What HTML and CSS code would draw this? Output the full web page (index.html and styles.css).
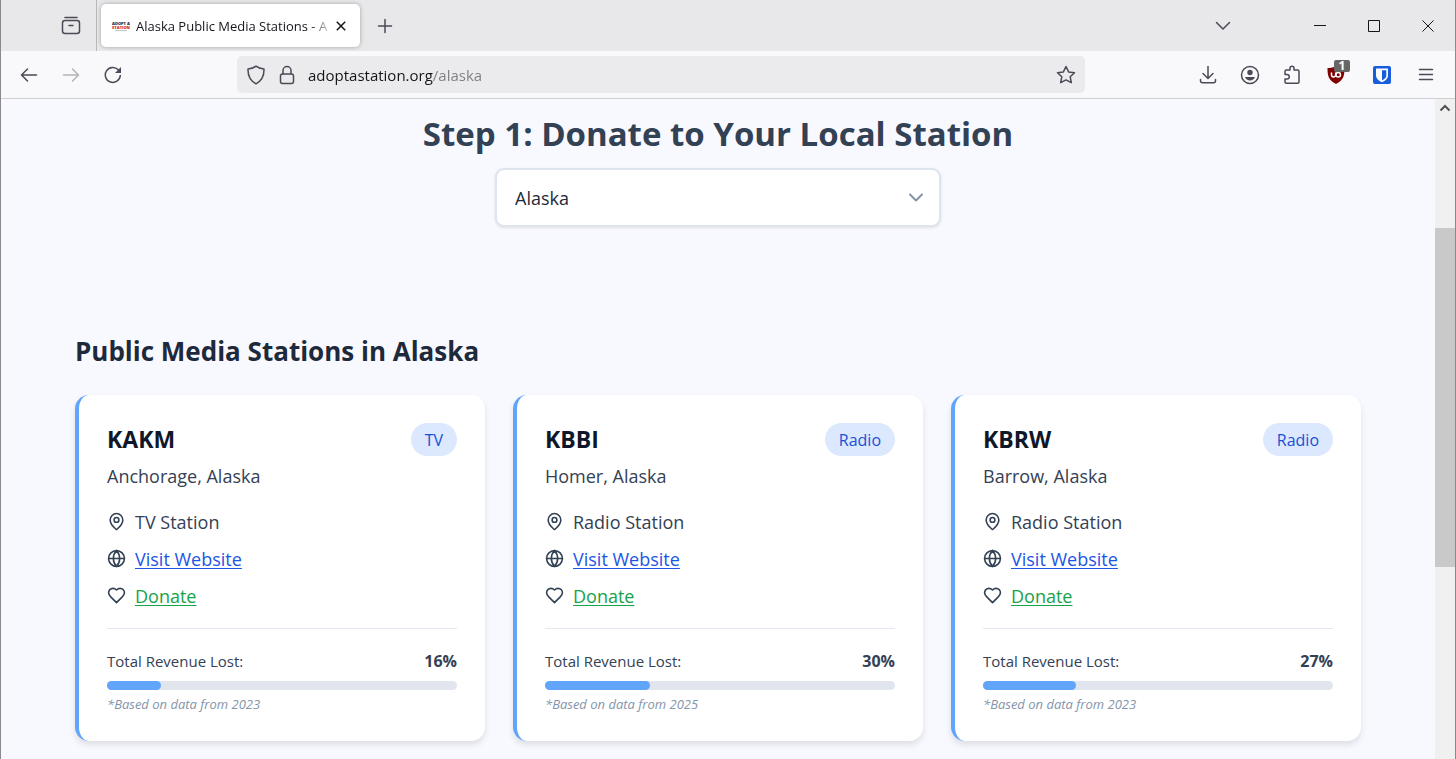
FILE: index.html
```
<!DOCTYPE html>
<html lang="en">
<head>
    <meta charset="UTF-8">
    <meta name="viewport" content="width=device-width, initial-scale=1.0">
    <title>Alaska Public Media Stations - Adopt a Station</title>
    <link rel="stylesheet" href="styles.css">
</head>
<body>

<!-- Shared icons -->
<svg class="sprite" aria-hidden="true">
    <symbol id="icon-pin" viewBox="0 0 24 24">
        <path d="M20 10c0 5-5.500 10.200-7.400 11.800a1 1 0 0 1-1.200 0C9.500 20.200 4 15 4 10a8 8 0 0 1 16 0"/>
        <circle cx="12" cy="10" r="3"/>
    </symbol>
    <symbol id="icon-globe" viewBox="0 0 24 24">
        <circle cx="12" cy="12" r="10"/>
        <path d="M12 2a14.500 14.500 0 0 0 0 20 14.500 14.500 0 0 0 0-20M2 12h20"/>
    </symbol>
    <symbol id="icon-heart" viewBox="0 0 24 24">
        <path d="M19 14c1.490-1.460 3-3.210 3-5.500A5.500 5.500 0 0 0 16.500 3c-1.760 0-3 .5-4.500 2-1.500-1.500-2.740-2-4.500-2A5.500 5.500 0 0 0 2 8.500c0 2.300 1.500 4.050 3 5.500l7 7Z"/>
    </symbol>
</svg>

<div class="window">
    <!-- Tab strip -->
    <div class="tab-bar">
        <div class="tab-tools">
            <button type="button" class="icon-btn" aria-label="View">
                <svg class="line" width="20" height="20" viewBox="0 0 20 20"><path d="M4 1.500h12"/><rect x="1.500" y="4.500" width="17" height="13" rx="2.500"/><path d="M8 9.500h4"/></svg>
            </button>
        </div>
        <div class="tab">
            <svg class="favicon" width="18" height="10" viewBox="0 0 18 10" aria-hidden="true">
                <text x="9" y="4" class="fav-top">ADOPT A</text>
                <text x="9" y="8" class="fav-main">STATION</text>
                <path d="M3 9.500h12" stroke="#9aa3ad" stroke-width=".6"/>
            </svg>
            <span class="tab-title">Alaska Public Media Stations - A</span>
            <button type="button" class="tab-close" aria-label="Close tab">
                <svg width="10" height="10" viewBox="0 0 10 10"><path d="M.8.8l8.400 8.400M9.200.8L.8 9.200"/></svg>
            </button>
        </div>
        <button type="button" class="icon-btn new-tab" aria-label="New tab">
            <svg class="line" width="16" height="16" viewBox="0 0 16 16"><path d="M8 1.500v13M1.500 8h13"/></svg>
        </button>
        <div class="window-controls">
            <button type="button" class="icon-btn list-tabs" aria-label="List all tabs">
                <svg class="line" width="16" height="16" viewBox="0 0 16 16"><path d="M1.500 4.500L8 11l6.500-6.500"/></svg>
            </button>
            <button type="button" class="win-btn" aria-label="Minimize">
                <svg width="12" height="12" viewBox="0 0 12 12"><path d="M0 5.500h12"/></svg>
            </button>
            <button type="button" class="win-btn" aria-label="Maximize">
                <svg width="12" height="12" viewBox="0 0 12 12"><path d="M.5.5h11v11H.5z"/></svg>
            </button>
            <button type="button" class="win-btn" aria-label="Close">
                <svg width="12" height="12" viewBox="0 0 12 12"><path d="M.5.5l11 11M11.500.5l-11 11"/></svg>
            </button>
        </div>
    </div>

    <!-- Navigation bar -->
    <div class="nav-bar">
        <button type="button" class="icon-btn" aria-label="Back">
            <svg class="line" width="18" height="16" viewBox="0 0 18 16"><path d="M7.500 2L1.500 8l6 6M1.500 8h15"/></svg>
        </button>
        <button type="button" class="icon-btn" aria-label="Forward" disabled>
            <svg class="line" width="18" height="16" viewBox="0 0 18 16"><path d="M10.500 2l6 6-6 6M16.500 8h-15"/></svg>
        </button>
        <button type="button" class="icon-btn" aria-label="Reload">
            <svg class="line" width="18" height="18" viewBox="0 0 18 18"><path d="M16.300 9.500A7.500 7.500 0 1 1 14.300 3.800L16.300 6"/><path class="solid" d="M17 1v6h-6z"/></svg>
        </button>
        <div class="url-bar">
            <svg class="line" width="20" height="20" viewBox="0 0 20 20"><path d="M10 1.200c2.300 1.800 5 2.600 8 2.800.2 6.500-1.800 11.500-8 14.800C3.800 15.500 1.800 10.500 2 4c3-.2 5.700-1 8-2.800z"/></svg>
            <svg class="line" width="16" height="20" viewBox="0 0 16 20"><rect x="1.500" y="9" width="13" height="9.500" rx="2"/><path d="M4 9V5.500a4 4 0 0 1 8 0V9"/></svg>
            <input type="text" class="url-input" aria-label="Address" value="adoptastation.org/alaska">
            <button type="button" class="icon-btn star-btn" aria-label="Bookmark this page">
                <svg class="line" width="20" height="20" viewBox="0 0 20 20"><path d="M10 1.500l2.600 5.400 5.900.8-4.300 4.100 1.100 5.900L10 14.900l-5.300 2.800 1.100-5.900L1.500 7.700l5.900-.8z"/></svg>
            </button>
        </div>
        <button type="button" class="icon-btn" aria-label="Downloads">
            <svg class="line" width="18" height="18" viewBox="0 0 18 18"><path d="M9 .5v12M4 7.500l5 5 5-5M1.500 13.500v1.200a2 2 0 0 0 2 2h11a2 2 0 0 0 2-2v-1.200"/></svg>
        </button>
        <button type="button" class="icon-btn" aria-label="Account">
            <svg class="line" width="20" height="20" viewBox="0 0 20 20"><circle cx="10" cy="10" r="8.500"/><circle class="solid" cx="10" cy="7.500" r="2.700"/><path class="solid" d="M5 12h10c-.8 2.300-2.700 3.500-5 3.500S5.800 14.300 5 12z"/></svg>
        </button>
        <button type="button" class="icon-btn" aria-label="Extensions">
            <svg class="line" width="18" height="20" viewBox="0 0 18 20"><path d="M2 8V6.500A1.500 1.500 0 0 1 3.500 5H7V3.300a2 2 0 0 1 4 0V5h3.500A1.500 1.500 0 0 1 16 6.500v10.200a1.500 1.500 0 0 1-1.500 1.500h-11A1.500 1.500 0 0 1 2 16.700V14h2a2 2 0 0 0 0-4.500H2z"/></svg>
        </button>
        <button type="button" class="icon-btn wide blocker" aria-label="Ad blocker, 1 blocked">
            <svg width="18" height="18" viewBox="0 0 18 18"><path fill="#800000" d="M9 0c2.500 1.500 5 2 8.500 2 0 8-1 12-8.500 16C1.500 14 .5 10 .5 2 4 2 6.500 1.500 9 0z"/><path fill="none" stroke="#fff" stroke-width="1.500" d="M4.500 6.500v2.300a2.100 2.100 0 0 0 4.200 0V6.500"/><circle cx="11.200" cy="8.700" r="2.300" fill="none" stroke="#fff" stroke-width="1.500"/></svg>
            <span class="count">1</span>
        </button>
        <button type="button" class="icon-btn wide" aria-label="Password manager">
            <svg width="18" height="18" viewBox="0 0 18 18"><rect width="18" height="18" rx="2" fill="#175ddc"/><path fill="#fff" d="M3 2.500h12v7c0 3-2.500 5.200-6 6.700-3.500-1.500-6-3.700-6-6.700z"/><path fill="#175ddc" d="M9 4.200h4.300v5.300c0 2-1.600 3.600-4.300 4.900z"/></svg>
        </button>
        <button type="button" class="icon-btn" aria-label="Menu">
            <svg class="line" width="16" height="14" viewBox="0 0 16 14"><path d="M1.500 1.500h13M1.500 6.500h13M1.500 11.500h13"/></svg>
        </button>
    </div>

    <div class="viewport">
        <main class="page">
            <h1><label for="state">Step 1: Donate to Your Local Station</label></h1>
            <div class="state-picker">
                <select id="state">
                    <option>Alaska</option>
                </select>
                <svg width="16" height="10" viewBox="0 0 16 10" aria-hidden="true"><path d="M2 1.500l6 6 6-6"/></svg>
            </div>

            <h2>Public Media Stations in Alaska</h2>
            <div class="stations">
                <article class="card">
                    <header class="card-head">
                        <h3>KAKM</h3>
                        <span class="pill">TV</span>
                    </header>
                    <p class="location">Anchorage, Alaska</p>
                    <ul class="details">
                        <li><svg><use href="#icon-pin"/></svg>TV Station</li>
                        <li><svg><use href="#icon-globe"/></svg><a href="#">Visit Website</a></li>
                        <li><svg><use href="#icon-heart"/></svg><a href="#" class="donate">Donate</a></li>
                    </ul>
                    <div class="revenue">
                        <div class="revenue-row"><span>Total Revenue Lost:</span><strong>16%</strong></div>
                        <div class="bar"><div class="fill" style="width: 15.5%"></div></div>
                        <p class="note">*Based on data from 2023</p>
                    </div>
                </article>

                <article class="card">
                    <header class="card-head">
                        <h3>KBBI</h3>
                        <span class="pill">Radio</span>
                    </header>
                    <p class="location">Homer, Alaska</p>
                    <ul class="details">
                        <li><svg><use href="#icon-pin"/></svg>Radio Station</li>
                        <li><svg><use href="#icon-globe"/></svg><a href="#">Visit Website</a></li>
                        <li><svg><use href="#icon-heart"/></svg><a href="#" class="donate">Donate</a></li>
                    </ul>
                    <div class="revenue">
                        <div class="revenue-row"><span>Total Revenue Lost:</span><strong>30%</strong></div>
                        <div class="bar"><div class="fill" style="width: 30%"></div></div>
                        <p class="note">*Based on data from 2025</p>
                    </div>
                </article>

                <article class="card">
                    <header class="card-head">
                        <h3>KBRW</h3>
                        <span class="pill">Radio</span>
                    </header>
                    <p class="location">Barrow, Alaska</p>
                    <ul class="details">
                        <li><svg><use href="#icon-pin"/></svg>Radio Station</li>
                        <li><svg><use href="#icon-globe"/></svg><a href="#">Visit Website</a></li>
                        <li><svg><use href="#icon-heart"/></svg><a href="#" class="donate">Donate</a></li>
                    </ul>
                    <div class="revenue">
                        <div class="revenue-row"><span>Total Revenue Lost:</span><strong>27%</strong></div>
                        <div class="bar"><div class="fill" style="width: 26.7%"></div></div>
                        <p class="note">*Based on data from 2023</p>
                    </div>
                </article>
            </div>
        </main>

        <div class="scrollbar" aria-hidden="true">
            <svg width="12" height="8" viewBox="0 0 12 8"><path d="M1.500 6.500L6 2l4.500 4.500"/></svg>
            <div class="thumb"></div>
        </div>
    </div>
</div>

</body>
</html>
```
FILE: styles.css
```
* {
    box-sizing: border-box;
}

body {
    margin: 0;
    font-family: "Open Sans", "Noto Sans", sans-serif;
    color: #334155;
    background-color: #f8f9fe;
}

h1, h2, h3, p, ul {
    margin: 0;
    padding: 0;
}

button {
    padding: 0;
    border: none;
    background: none;
    font-family: inherit;
}

.sprite {
    display: none;
}

.window {
    display: flex;
    flex-direction: column;
    min-height: 100vh;
    border-left: 1px solid #8a8a8c;
    border-right: 1px solid #8a8a8c;
}

/* Browser toolbar */
.icon-btn {
    display: flex;
    align-items: center;
    justify-content: center;
    flex: none;
    width: 42px;
    height: 37px;
    color: #4b4a57;
}

.icon-btn.wide {
    width: 46px;
}

.icon-btn:disabled {
    color: #b3b3b8;
}

.line {
    flex: none;
    fill: none;
    stroke: currentColor;
    stroke-width: 1.5;
    stroke-linecap: round;
    stroke-linejoin: round;
}

.line .solid {
    fill: currentColor;
    stroke: none;
}

.tab-bar {
    display: flex;
    align-items: center;
    height: 51px;
    background-color: #e8e8ea;
}

.tab-tools {
    display: flex;
    align-items: center;
    justify-content: flex-end;
    width: 96px;
    height: 51px;
    padding-right: 4px;
    border-right: 1px solid #b8b8bb;
}

.tab {
    display: flex;
    align-items: center;
    width: 259px;
    height: 43px;
    margin-left: 4px;
    padding: 0 11px;
    background-color: #fff;
    border-radius: 5px;
    box-shadow: 0 0 4px rgba(0, 0, 0, 0.3);
}

.favicon {
    flex: none;
    margin-right: 6px;
}

.fav-top, .fav-main {
    font-size: 4px;
    font-weight: 800;
    text-anchor: middle;
    fill: #1c2b45;
}

.fav-main {
    fill: #d8232f;
}

.tab-title {
    flex: 1;
    overflow: hidden;
    white-space: nowrap;
    font-size: 13px;
    color: #15141a;
    mask-image: linear-gradient(to left, transparent, #000 24px);
}

.tab-close {
    display: flex;
    flex: none;
    margin: 0 3px 0 2px;
}

.tab-close svg, .win-btn svg {
    fill: none;
    stroke: #15141a;
    stroke-width: 1.5;
}

.win-btn svg {
    stroke-width: 1;
}

.new-tab {
    margin-left: 4px;
}

.window-controls {
    display: flex;
    align-items: center;
    margin-left: auto;
}

.list-tabs {
    margin-right: 49px;
}

.win-btn {
    display: flex;
    align-items: center;
    justify-content: center;
    width: 54px;
    height: 51px;
}

.nav-bar {
    display: flex;
    align-items: center;
    height: 48px;
    padding: 0 8px 0 7px;
    background-color: #f9f9fb;
    border-bottom: 1px solid #cfcfd3;
}

.url-bar {
    display: flex;
    align-items: center;
    flex: 1;
    height: 37px;
    margin: 0 102px 0 103px;
    padding-left: 9px;
    background-color: #ebebed;
    border-radius: 5px;
}

.url-bar .line {
    color: #4b4a57;
    margin-right: 13px;
}

.url-bar .star-btn .line {
    margin-right: 0;
}

.url-bar .star-btn {
    width: 38px;
}

/* Domain is dark, the path after it is grey */
.url-input {
    flex: 1;
    min-width: 0;
    padding: 0;
    border: none;
    outline: none;
    font-family: inherit;
    font-size: 15px;
    color: transparent;
    background: linear-gradient(to right, #15141a 125px, #7d7d82 125px);
    background-clip: text;
    -webkit-background-clip: text;
}

.blocker {
    position: relative;
}

.count {
    position: absolute;
    top: 4px;
    right: 9px;
    width: 16px;
    height: 12px;
    border-radius: 2px;
    background-color: #666;
    color: #fff;
    font-size: 12px;
    font-weight: 700;
    line-height: 12px;
}

/* Page */
.viewport {
    display: flex;
    flex: 1;
}

.page {
    flex: 1;
    padding: 14px 74px 18px;
    background-color: #f8f9fe;
}

h1 {
    font-size: 33px;
    line-height: 42px;
    text-align: center;
}

.state-picker {
    position: relative;
    width: 446px;
    max-width: 100%;
    margin: 13px auto 0;
}

.state-picker select {
    display: block;
    width: 100%;
    height: 59px;
    padding: 0 18px;
    appearance: none;
    border: 2px solid #dde4ed;
    border-radius: 9px;
    background-color: #fff;
    box-shadow: 0 1px 3px rgba(0, 0, 0, 0.1);
    color: #1e293b;
    font-family: inherit;
    font-size: 18px;
}

.state-picker svg {
    position: absolute;
    top: 25px;
    right: 17px;
    fill: none;
    stroke: #8494ab;
    stroke-width: 2;
    stroke-linecap: round;
    stroke-linejoin: round;
    pointer-events: none;
}

h2 {
    margin: 106px 0 26px;
    font-size: 26px;
    line-height: 36px;
    color: #1e293b;
}

.stations {
    display: grid;
    grid-template-columns: repeat(3, 1fr);
    gap: 28px;
}

.card {
    padding: 28px;
    background-color: #fff;
    border-left: 4px solid #60a5fa;
    border-radius: 14px;
    box-shadow: 0 4px 6px rgba(0, 0, 0, 0.1);
}

.card-head {
    display: flex;
    align-items: center;
    justify-content: space-between;
}

h3 {
    font-size: 23px;
    line-height: 33px;
    color: #0f172a;
}

.pill {
    padding: 2px 14px 0;
    border-radius: 17px;
    background-color: #dbe8fe;
    color: #1d4ed8;
    font-size: 16px;
    line-height: 31px;
}

.location {
    margin-top: 6px;
    font-size: 18px;
    line-height: 28px;
}

.details {
    display: flex;
    flex-direction: column;
    gap: 9px;
    margin-top: 18px;
    list-style: none;
}

.details li {
    display: flex;
    align-items: center;
    gap: 9px;
    font-size: 18px;
    line-height: 28px;
}

.details svg {
    width: 19px;
    height: 19px;
    margin-bottom: 2px;
    fill: none;
    stroke: #334155;
    stroke-width: 2;
    stroke-linecap: round;
    stroke-linejoin: round;
}

.details a {
    color: #1d55e5;
    text-underline-offset: 2px;
}

.details .donate {
    color: #16a34a;
}

.revenue {
    margin-top: 18px;
    padding-top: 20px;
    border-top: 1px solid #e2e8f0;
}

.revenue-row {
    display: flex;
    justify-content: space-between;
    font-size: 15px;
    line-height: 24px;
}

.revenue-row strong {
    font-size: 16px;
}

.bar {
    height: 9px;
    margin-top: 8px;
    border-radius: 5px;
    background-color: #e0e5ee;
}

.fill {
    height: 9px;
    border-radius: 5px;
    background-color: #60a5fa;
}

.note {
    margin-top: 5px;
    font-size: 13px;
    font-style: italic;
    line-height: 18px;
    color: #8494ab;
}

.scrollbar {
    display: grid;
    grid-template-rows: 20px 17fr 53fr 30fr;
    justify-items: center;
    width: 20px;
    background-color: #f0f0f0;
}

.scrollbar svg {
    margin-top: 5px;
    fill: none;
    stroke: #505050;
    stroke-width: 2;
}

.thumb {
    grid-row: 3;
    width: 100%;
    background-color: #c9c9c9;
}
```
